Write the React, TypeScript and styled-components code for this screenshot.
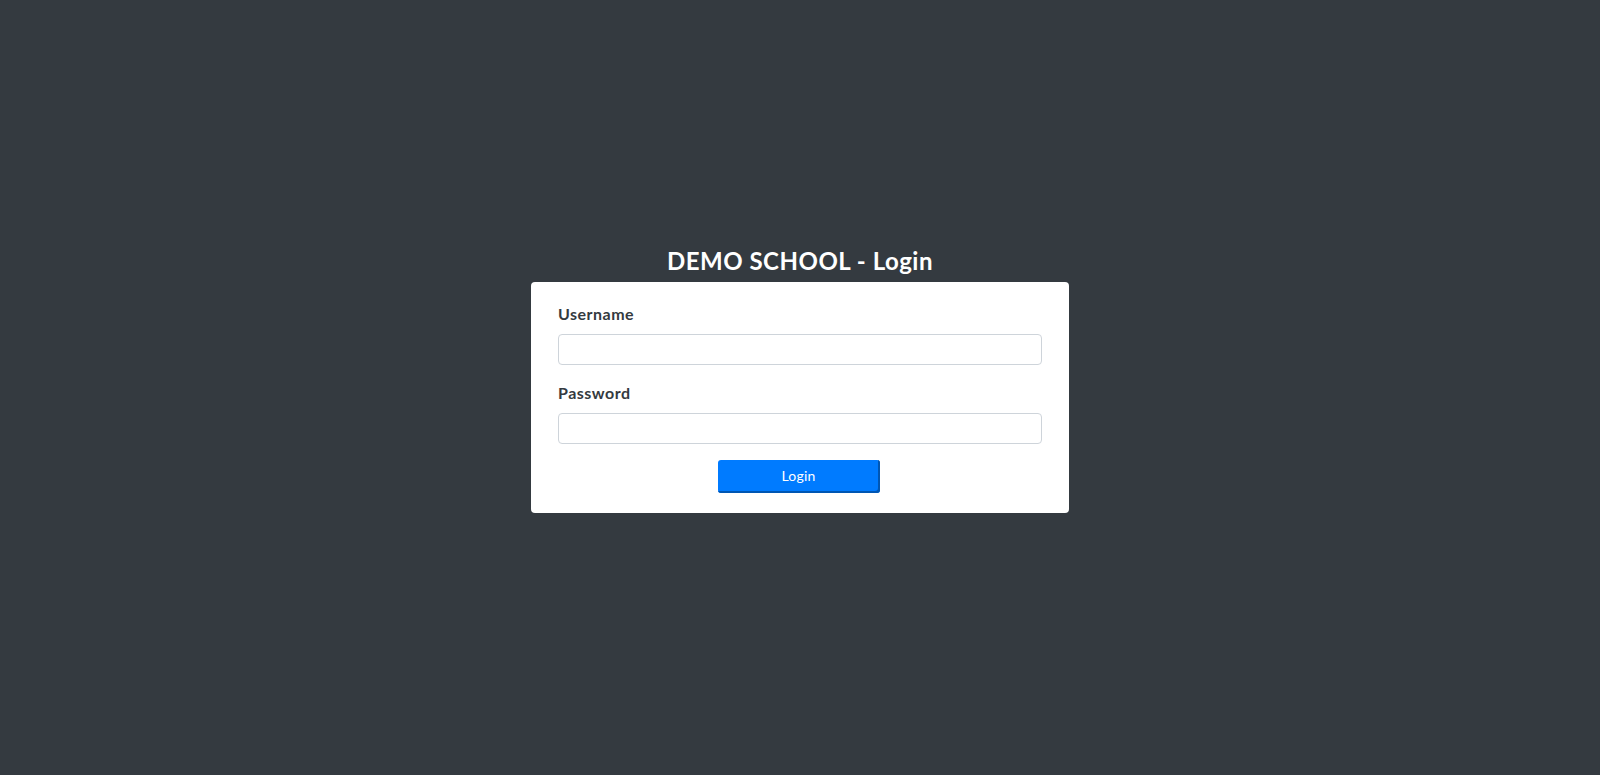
import React from "react";
import styled, { createGlobalStyle } from "styled-components";

const GlobalStyle = createGlobalStyle`
  html, body {
    margin: 0;
    padding: 0;
    background: #343a40;
    font-family: "Lato", "Noto Sans", sans-serif;
  }
  * { box-sizing: border-box; }
`;

const Page = styled.div`
  min-height: 100vh;
  display: flex;
  flex-direction: column;
  align-items: center;
  padding-top: 246px;
`;

const Title = styled.h1`
  margin: 0 0 7px;
  color: #ffffff;
  font-size: 24px;
  font-weight: 700;
  line-height: 29px;
  letter-spacing: 0.5px;
`;

const Card = styled.form`
  width: 538px;
  background: #ffffff;
  border-radius: 4px;
  padding: 20px 27px 20px;
  display: flex;
  flex-direction: column;
`;

const Field = styled.div`
  display: flex;
  flex-direction: column;
  margin-bottom: 16px;
`;

const Label = styled.label`
  color: #343a40;
  font-size: 16px;
  font-weight: 700;
  line-height: 24px;
  letter-spacing: 0.5px;
  margin-bottom: 8px;
`;

const Input = styled.input`
  height: 31px;
  width: 100%;
  border: 1px solid #ced4da;
  border-radius: 4px;
  padding: 4px 10px;
  font-family: inherit;
  font-size: 14px;
  outline: none;
`;

const Button = styled.button`
  align-self: center;
  width: 162px;
  height: 33px;
  margin-right: 3px;
  background: #007bff;
  color: #ffffff;
  border: none;
  border-radius: 3px;
  box-shadow: inset -2px -2px 0 #0056b3;
  font-family: inherit;
  font-size: 14px;
  font-weight: 400;
  letter-spacing: 0.2px;
  cursor: pointer;
  padding: 0 0 2px;
`;

export default function App() {
  return (
    <>
      <GlobalStyle />
      <Page>
        <Title>DEMO SCHOOL - Login</Title>
        <Card onSubmit={(e) => e.preventDefault()}>
          <Field>
            <Label htmlFor="username">Username</Label>
            <Input id="username" type="text" />
          </Field>
          <Field>
            <Label htmlFor="password">Password</Label>
            <Input id="password" type="password" />
          </Field>
          <Button type="submit">Login</Button>
        </Card>
      </Page>
    </>
  );
}
